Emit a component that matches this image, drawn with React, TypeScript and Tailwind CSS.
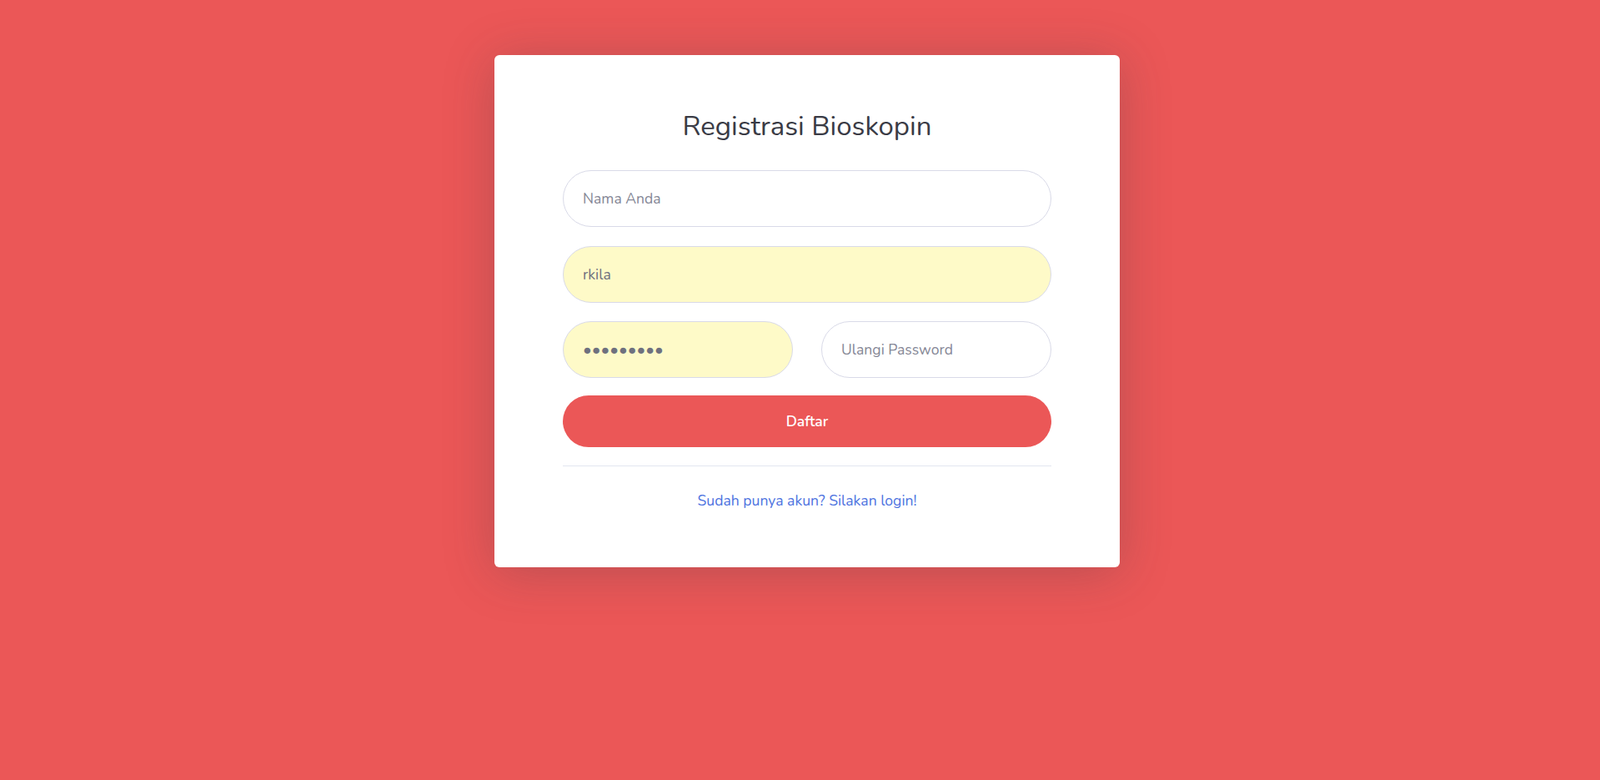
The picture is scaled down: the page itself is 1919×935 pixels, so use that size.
export default function App() {
  const font = { fontFamily: 'Nunito, Lato, "Open Sans", sans-serif' }
  return (
    <div
      className="min-h-screen w-full bg-[#eb5757] flex justify-center items-start pt-[66px] pl-[17px]"
      style={font}
    >
      <div className="w-[750px] h-[614px] bg-white rounded-[6px] shadow-[0_6px_60px_0_rgba(58,59,69,0.28)] px-[82px] pt-[67px]">
        <h1 className="text-center text-[33px] leading-[38px] text-[#3a3b45] font-normal">
          Registrasi Bioskopin
        </h1>

        <form className="mt-[33px]" onSubmit={(e) => e.preventDefault()}>
          <input
            type="text"
            placeholder="Nama Anda"
            className="block w-full h-[68px] rounded-full border border-[#d9dae8] bg-white px-[23px] text-[17.6px] text-[#6e707e] placeholder:text-[#858796] outline-none"
          />
          <input
            type="email"
            defaultValue="rkila"
            className="block w-full h-[68px] mt-[23px] rounded-full border border-[#d9dae8] bg-[#fefac8] px-[23px] text-[17.6px] text-[#6e707e] outline-none"
          />
          <div className="grid grid-cols-2 gap-[34px] mt-[22px]">
            <input
              type="password"
              defaultValue="rkila1234"
              className="block w-full h-[68px] rounded-full border border-[#d9dae8] bg-[#fefac8] px-[23px] text-[20.5px] text-[#6e707e] outline-none"
            />
            <input
              type="password"
              placeholder="Ulangi Password"
              className="block w-full h-[68px] rounded-full border border-[#d9dae8] bg-white px-[23px] text-[17.6px] text-[#6e707e] placeholder:text-[#858796] outline-none"
            />
          </div>
          <button
            type="submit"
            className="block w-full h-[62px] mt-[21px] rounded-full bg-[#eb5757] text-white text-[17.6px] font-semibold"
          >
            Daftar
          </button>
        </form>

        <hr className="mt-[22px] border-t border-[#e3e6f0]" />

        <div className="text-center mt-[28px]">
          <a href="#" className="text-[17.6px] text-[#4e73df]">
            Sudah punya akun? Silakan login!
          </a>
        </div>
      </div>
    </div>
  )
}
